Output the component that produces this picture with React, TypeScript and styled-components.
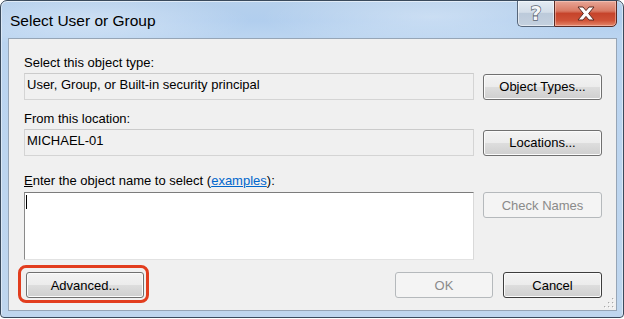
import React from "react";
import styled, { createGlobalStyle } from "styled-components";

const Global = createGlobalStyle`
  html, body { margin: 0; padding: 0; background: #ffffff; }
  body { font-family: "Liberation Sans", Arial, sans-serif; }
`;

const Window = styled.div`
  box-sizing: border-box;
  width: 624px;
  height: 318px;
  border: 1px solid #3a4a5c;
  border-radius: 7px 7px 4px 4px;
  padding: 0 6px 6px 7px;
  display: flex;
  flex-direction: column;
  overflow: hidden;
  box-shadow: inset 0 1px 0 rgba(255, 255, 255, 0.55), inset 1px 0 0 rgba(255, 255, 255, 0.45),
    inset -1px 0 0 rgba(255, 255, 255, 0.45);
  background:
    radial-gradient(ellipse 160px 26px at 90px 20px, rgba(255, 255, 255, 0.38), rgba(255, 255, 255, 0)),
    radial-gradient(ellipse 170px 30px at 430px 16px, rgba(255, 255, 255, 0.32), rgba(255, 255, 255, 0)),
    linear-gradient(180deg, #b6d0ec 0px, #b1ceee 20px, #bad4f0 34px, #bfd6ee 100%);
`;

const TitleBar = styled.div`
  height: 37px;
  display: flex;
  align-items: flex-start;
  flex-shrink: 0;
`;

const Title = styled.div`
  margin: 11px 0 0 2px;
  font-size: 15.5px;
  line-height: 18px;
  color: #000;
  flex: 1;
`;

const CaptionButtons = styled.div`
  display: flex;
  margin-top: -1px;
`;

const HelpButton = styled.div`
  box-sizing: border-box;
  width: 37px;
  height: 27px;
  border: 1px solid #56667a;
  border-right: none;
  border-radius: 0 0 0 5px;
  display: flex;
  align-items: center;
  justify-content: center;
  box-shadow: inset 0 0 0 1px rgba(255, 255, 255, 0.55);
  background: linear-gradient(180deg, #e4ebf3 0%, #d3dde8 45%, #bccada 50%, #c4d1df 100%);
  font-family: "DejaVu Sans", sans-serif;
  font-weight: bold;
  font-size: 19px;
  line-height: 19px;
  color: #f4f6f8;
  -webkit-text-stroke: 1.4px #5a6470;
  paint-order: stroke fill;
`;

const CloseButton = styled.div`
  box-sizing: border-box;
  width: 63px;
  height: 27px;
  border: 1px solid #5a2a24;
  border-radius: 0 0 5px 0;
  display: flex;
  align-items: center;
  justify-content: center;
  box-shadow: inset 0 0 0 1px rgba(255, 220, 210, 0.45);
  background: linear-gradient(180deg, #e8a697 0%, #d97a64 40%, #c6442b 50%, #cf5237 78%, #e4876b 100%);
`;

const Panel = styled.div`
  position: relative;
  box-sizing: border-box;
  height: 273px;
  border: 1px solid #96a5b6;
  background: #f0f0f0;
  padding: 16px 14px 0 15px;
  display: flex;
  flex-direction: column;
  font-size: 13px;
  color: #000;
`;

const Label = styled.div<{ $mt: number }>`
  margin-top: ${(p) => p.$mt}px;
  height: 15px;
  line-height: 15px;
  white-space: nowrap;
`;

const Row = styled.div<{ $mt: number; $align: string }>`
  margin-top: ${(p) => p.$mt}px;
  display: grid;
  grid-template-columns: 450px 119px;
  column-gap: 9px;
  align-items: ${(p) => p.$align};
`;

const ReadOnlyBox = styled.div`
  box-sizing: border-box;
  height: 27px;
  border: 1px solid #d4d4d4;
  border-top-color: #cbcbcb;
  background: #f0f0f0;
  padding: 3px 0 0 2px;
  line-height: 15px;
  white-space: nowrap;
`;

const NameInput = styled.div`
  box-sizing: border-box;
  height: 68px;
  border: 1px solid;
  border-color: #7c7c7c #d9d9d9 #e2e2e2 #8a8a8a;
  background: #ffffff;
  padding: 2px 0 0 1px;
`;

const Caret = styled.span`
  display: block;
  width: 1px;
  height: 14px;
  background: #000;
`;

const Button = styled.div<{ $w: number; $disabled?: boolean; $default?: boolean }>`
  box-sizing: border-box;
  width: ${(p) => p.$w}px;
  height: 26px;
  border: 1px solid ${(p) => (p.$disabled ? "#b5b9bc" : p.$default ? "#3d3d3d" : "#707070")};
  border-radius: 3px;
  display: flex;
  align-items: center;
  justify-content: center;
  white-space: nowrap;
  font-size: 13px;
  color: ${(p) => (p.$disabled ? "#8a8a8a" : "#000")};
  box-shadow: ${(p) => (p.$disabled ? "none" : "inset 0 0 0 1px #fbfbfb")};
  background: ${(p) =>
    p.$disabled
      ? "#f4f4f4"
      : "linear-gradient(180deg, #f3f3f3 0%, #ececec 48%, #dddddd 52%, #cfcfcf 100%)"};
`;

const BottomRow = styled.div`
  margin-top: 12px;
  display: flex;
  align-items: center;
  gap: 10px;
`;

const HighlightWrap = styled.div`
  position: relative;
  margin-left: 2px;
  margin-right: auto;
`;

const Highlight = styled.span`
  position: absolute;
  top: -7px;
  left: -8px;
  right: -5px;
  bottom: -5px;
  border: 3px solid #e23d1e;
  border-radius: 8px;
  pointer-events: none;
`;

const Link = styled.span`
  color: #0066cc;
  text-decoration: underline;
`;

const AccessKey = styled.span`
  text-decoration: underline;
`;

const Grip = styled.svg`
  position: absolute;
  right: 2px;
  bottom: 2px;
`;

export default function App() {
  const dots: [number, number][] = [
    [8, 0],
    [4, 4],
    [8, 4],
    [0, 8],
    [4, 8],
    [8, 8],
  ];
  return (
    <>
      <Global />
      <Window>
        <TitleBar>
          <Title>Select User or Group</Title>
          <CaptionButtons>
            <HelpButton>?</HelpButton>
            <CloseButton>
              <svg width="20" height="15" viewBox="0 0 20 15">
                <path
                  d="M2 1 H7 L10 4.6 L13 1 H18 L12.6 7.5 L18 14 H13 L10 10.4 L7 14 H2 L7.4 7.5 Z"
                  fill="#ffffff"
                  stroke="#5b2a22"
                  strokeWidth="1"
                  strokeLinejoin="round"
                />
              </svg>
            </CloseButton>
          </CaptionButtons>
        </TitleBar>
        <Panel>
          <Label $mt={0}>Select this object type:</Label>
          <Row $mt={3} $align="center">
            <ReadOnlyBox>User, Group, or Built-in security principal</ReadOnlyBox>
            <Button $w={119}>Object Types...</Button>
          </Row>
          <Label $mt={11}>From this location:</Label>
          <Row $mt={3} $align="center">
            <ReadOnlyBox>MICHAEL-01</ReadOnlyBox>
            <Button $w={119}>Locations...</Button>
          </Row>
          <Label $mt={17}>
            <AccessKey>E</AccessKey>nter the object name to select (<Link>examples</Link>):
          </Label>
          <Row $mt={4} $align="start">
            <NameInput>
              <Caret />
            </NameInput>
            <Button $w={119} $disabled>
              Check Names
            </Button>
          </Row>
          <BottomRow>
            <HighlightWrap>
              <Button $w={118}>Advanced...</Button>
              <Highlight />
            </HighlightWrap>
            <Button $w={98} $disabled>
              OK
            </Button>
            <Button $w={99} $default>
              Cancel
            </Button>
          </BottomRow>
          <Grip width="10" height="10" viewBox="0 0 10 10">
            {dots.map(([x, y]) => (
              <g key={`${x}-${y}`}>
                <rect x={x + 1} y={y + 1} width="1" height="1" fill="#ffffff" />
                <rect x={x} y={y} width="1.2" height="1.2" fill="#a8a8a8" />
              </g>
            ))}
          </Grip>
        </Panel>
      </Window>
    </>
  );
}
